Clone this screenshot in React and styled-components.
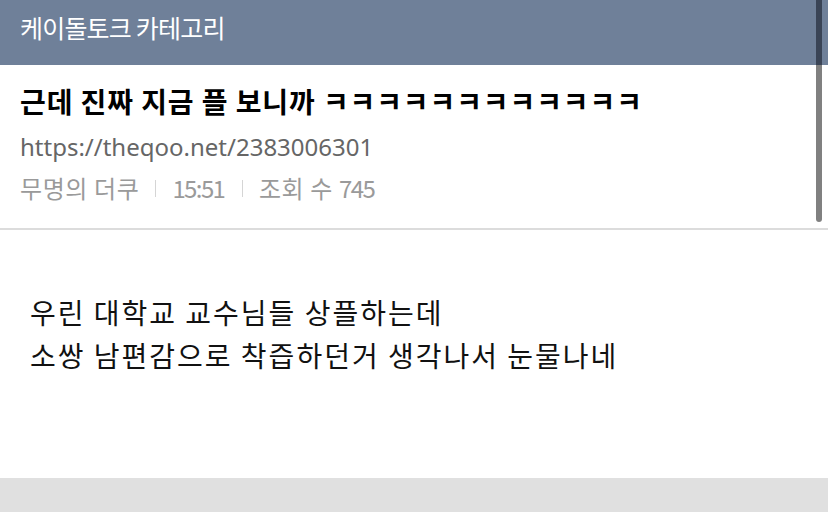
import React from "react";
import styled, { createGlobalStyle } from "styled-components";

const Global = createGlobalStyle`
  html, body { margin: 0; padding: 0; background: #fff; }
  body { font-family: "Noto Sans CJK KR", "Noto Sans", sans-serif; }
`;

const Page = styled.div`
  position: relative;
  width: 828px;
  height: 512px;
  overflow: hidden;
  display: flex;
  flex-direction: column;
  background: #fff;
`;

const Header = styled.div`
  height: 65px;
  flex: none;
  background: #6f8099;
  color: #fff;
  display: flex;
  align-items: center;
  padding: 0 20px 12px;
  box-sizing: border-box;
  font-size: 25px;
  letter-spacing: -0.8px;
`;

const Info = styled.div`
  flex: none;
  height: 165px;
  box-sizing: border-box;
  padding: 16px 20px 0;
  border-bottom: 2px solid #dcdcdc;
  display: flex;
  flex-direction: column;
`;

const Title = styled.div`
  font-size: 28px;
  font-weight: 700;
  color: #000;
  line-height: 40px;
  letter-spacing: 0.9px;
  white-space: nowrap;
`;

const Url = styled.div`
  margin-top: 9px;
  font-size: 24px;
  color: #666;
  line-height: 34px;
  font-family: "Noto Sans", "Noto Sans CJK KR", sans-serif;
`;

const Meta = styled.div`
  margin-top: 7px;
  font-size: 24px;
  color: #9a9a9a;
  line-height: 34px;
  letter-spacing: 0.6px;
  display: flex;
  align-items: center;
`;

const Num = styled.span`
  letter-spacing: -1.6px;
  margin-right: 1.6px;
`;

const Sep = styled.span`
  display: inline-block;
  width: 1px;
  height: 17px;
  background: #d5d5d5;
  margin: 0 16px;
`;

const Body = styled.div`
  flex: 1;
  padding: 61px 30px 0;
  font-size: 28px;
  line-height: 43px;
  color: #111;
  letter-spacing: 2px;
  white-space: nowrap;
`;

const Footer = styled.div`
  flex: none;
  height: 34px;
  background: #e0e0e0;
`;

const Scrollbar = styled.div`
  position: absolute;
  top: 0;
  right: 6px;
  width: 6px;
  height: 222px;
  border-radius: 0 0 3px 3px;
  background: linear-gradient(#3a4456 0 65px, #808080 65px);
`;

export default function App() {
  return (
    <Page>
      <Global />
      <Header>케이돌토크 카테고리</Header>
      <Info>
        <Title>근데 진짜 지금 플 보니까 ㅋㅋㅋㅋㅋㅋㅋㅋㅋㅋㅋㅋ</Title>
        <Url>https://theqoo.net/2383006301</Url>
        <Meta>
          무명의 더쿠<Sep />
          <Num>15:51</Num>
          <Sep />
          조회 수&nbsp;<Num>745</Num>
        </Meta>
      </Info>
      <Body>
        우린 대학교 교수님들 상플하는데
        <br />
        소쌍 남편감으로 착즙하던거 생각나서 눈물나네
      </Body>
      <Footer />
      <Scrollbar />
    </Page>
  );
}
